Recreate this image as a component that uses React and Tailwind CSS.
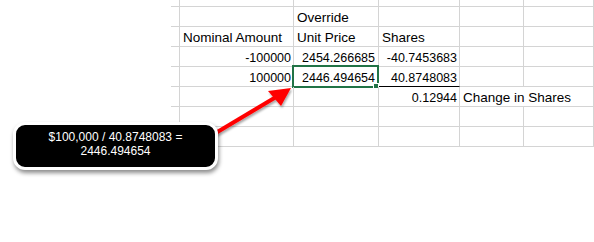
import React from "react";

const G = "border-r border-b border-r-[#d4d4d4] border-b-[#d4d4d4]";
const font = { fontFamily: '"Liberation Sans", Arial, sans-serif' };

function Cell({ w, children, align = "left", num = false, extra = "" }) {
  return (
    <div
      className={`relative h-full shrink-0 flex items-end whitespace-nowrap ${G} ${w} ${
        align === "right" ? "justify-end pr-[2px]" : "justify-start pl-[3px]"
      } ${extra}`}
    >
      {children !== undefined && (
        <span
          className={`leading-none pb-[2px] text-black ${num ? "text-[12.5px]" : "text-[13.5px]"}`}
        >
          {children}
        </span>
      )}
    </div>
  );
}

function Row({ h = "h-[20px]", children }) {
  return <div className={`flex ${h}`}>{children}</div>;
}

export default function App() {
  const cols = ["w-[9px]", "w-[114px]", "w-[85px]", "w-[81px]", "w-[64px]", "w-[70px]"];
  const empty = (h) => (
    <Row h={h}>
      {cols.map((c, i) => (
        <Cell key={i} w={c} />
      ))}
    </Row>
  );
  return (
    <div className="relative w-[594px] h-[242px] bg-white overflow-hidden" style={font}>
      <div className="ml-[171px] w-[423px] flex flex-col">
        {empty("h-[7px]")}
        <Row>
          <Cell w={cols[0]} />
          <Cell w={cols[1]} />
          <Cell w={cols[2]}>Override</Cell>
          <Cell w={cols[3]} />
          <Cell w={cols[4]} />
          <Cell w={cols[5]} />
        </Row>
        <Row>
          <Cell w={cols[0]} />
          <Cell w={cols[1]}>Nominal Amount</Cell>
          <Cell w={cols[2]}>Unit Price</Cell>
          <Cell w={cols[3]} extra="pl-[2px]">Shares</Cell>
          <Cell w={cols[4]} />
          <Cell w={cols[5]} />
        </Row>
        <Row>
          <Cell w={cols[0]} />
          <Cell w={cols[1]} align="right" num>-100000</Cell>
          <Cell w={cols[2]} align="right" num extra="pr-[3px]">2454.266685</Cell>
          <Cell w={cols[3]} align="right" num>-40.7453683</Cell>
          <Cell w={cols[4]} />
          <Cell w={cols[5]} />
        </Row>
        <Row>
          <Cell w={cols[0]} />
          <Cell w={cols[1]} align="right" num>100000</Cell>
          <div className={`relative h-full shrink-0 flex items-end justify-end pr-[3px] ${G} ${cols[2]}`}>
            <span className="leading-none pb-[2px] text-black text-[12.5px]">2446.494654</span>
            <div className="absolute -left-[2px] -top-[2px] w-[87px] h-[23px] border-2 border-[#217346]" />
            <div className="absolute left-[79px] top-[16px] w-[6px] h-[6px] bg-[#217346] border border-white" />
          </div>
          <div className={`relative h-full shrink-0 flex items-end justify-end pr-[2px] border-r border-b border-r-[#d4d4d4] border-b-black ${cols[3]}`}>
            <span className="leading-none pb-[2px] text-black text-[12.5px]">40.8748083</span>
          </div>
          <Cell w={cols[4]} />
          <Cell w={cols[5]} />
        </Row>
        <Row>
          <Cell w={cols[0]} />
          <Cell w={cols[1]} />
          <Cell w={cols[2]} />
          <Cell w={cols[3]} align="right" num>0.12944</Cell>
          <Cell w="w-[134px]">Change in Shares</Cell>
        </Row>
        {empty("h-[20px]")}
        {empty("h-[20px]")}
      </div>

      {/* Red arrow */}
      <svg className="absolute left-0 top-0" width="594" height="242" viewBox="0 0 594 242">
        <defs>
          <filter id="sh" x="-20%" y="-20%" width="140%" height="140%">
            <feDropShadow dx="1" dy="2" stdDeviation="1" floodColor="#000" floodOpacity="0.35" />
          </filter>
        </defs>
        <g filter="url(#sh)">
          <line x1="214" y1="134" x2="276" y2="97" stroke="#f00" strokeWidth="4" />
          <polygon points="291,88 281,106 268,91" fill="#f00" />
        </g>
      </svg>

      {/* Callout */}
      <div className="absolute left-[13px] top-[122px] w-[205px] h-[48px] rounded-[12px] border-[3px] border-white bg-black shadow-[1px_3px_4px_rgba(0,0,0,0.45)] flex flex-col items-center justify-center pb-[3px]">
        <div className="text-white text-[12px] leading-[13.5px] text-center">$100,000 / 40.8748083 =</div>
        <div className="text-white text-[12px] leading-[13.5px] text-center">2446.494654</div>
      </div>
    </div>
  );
}
